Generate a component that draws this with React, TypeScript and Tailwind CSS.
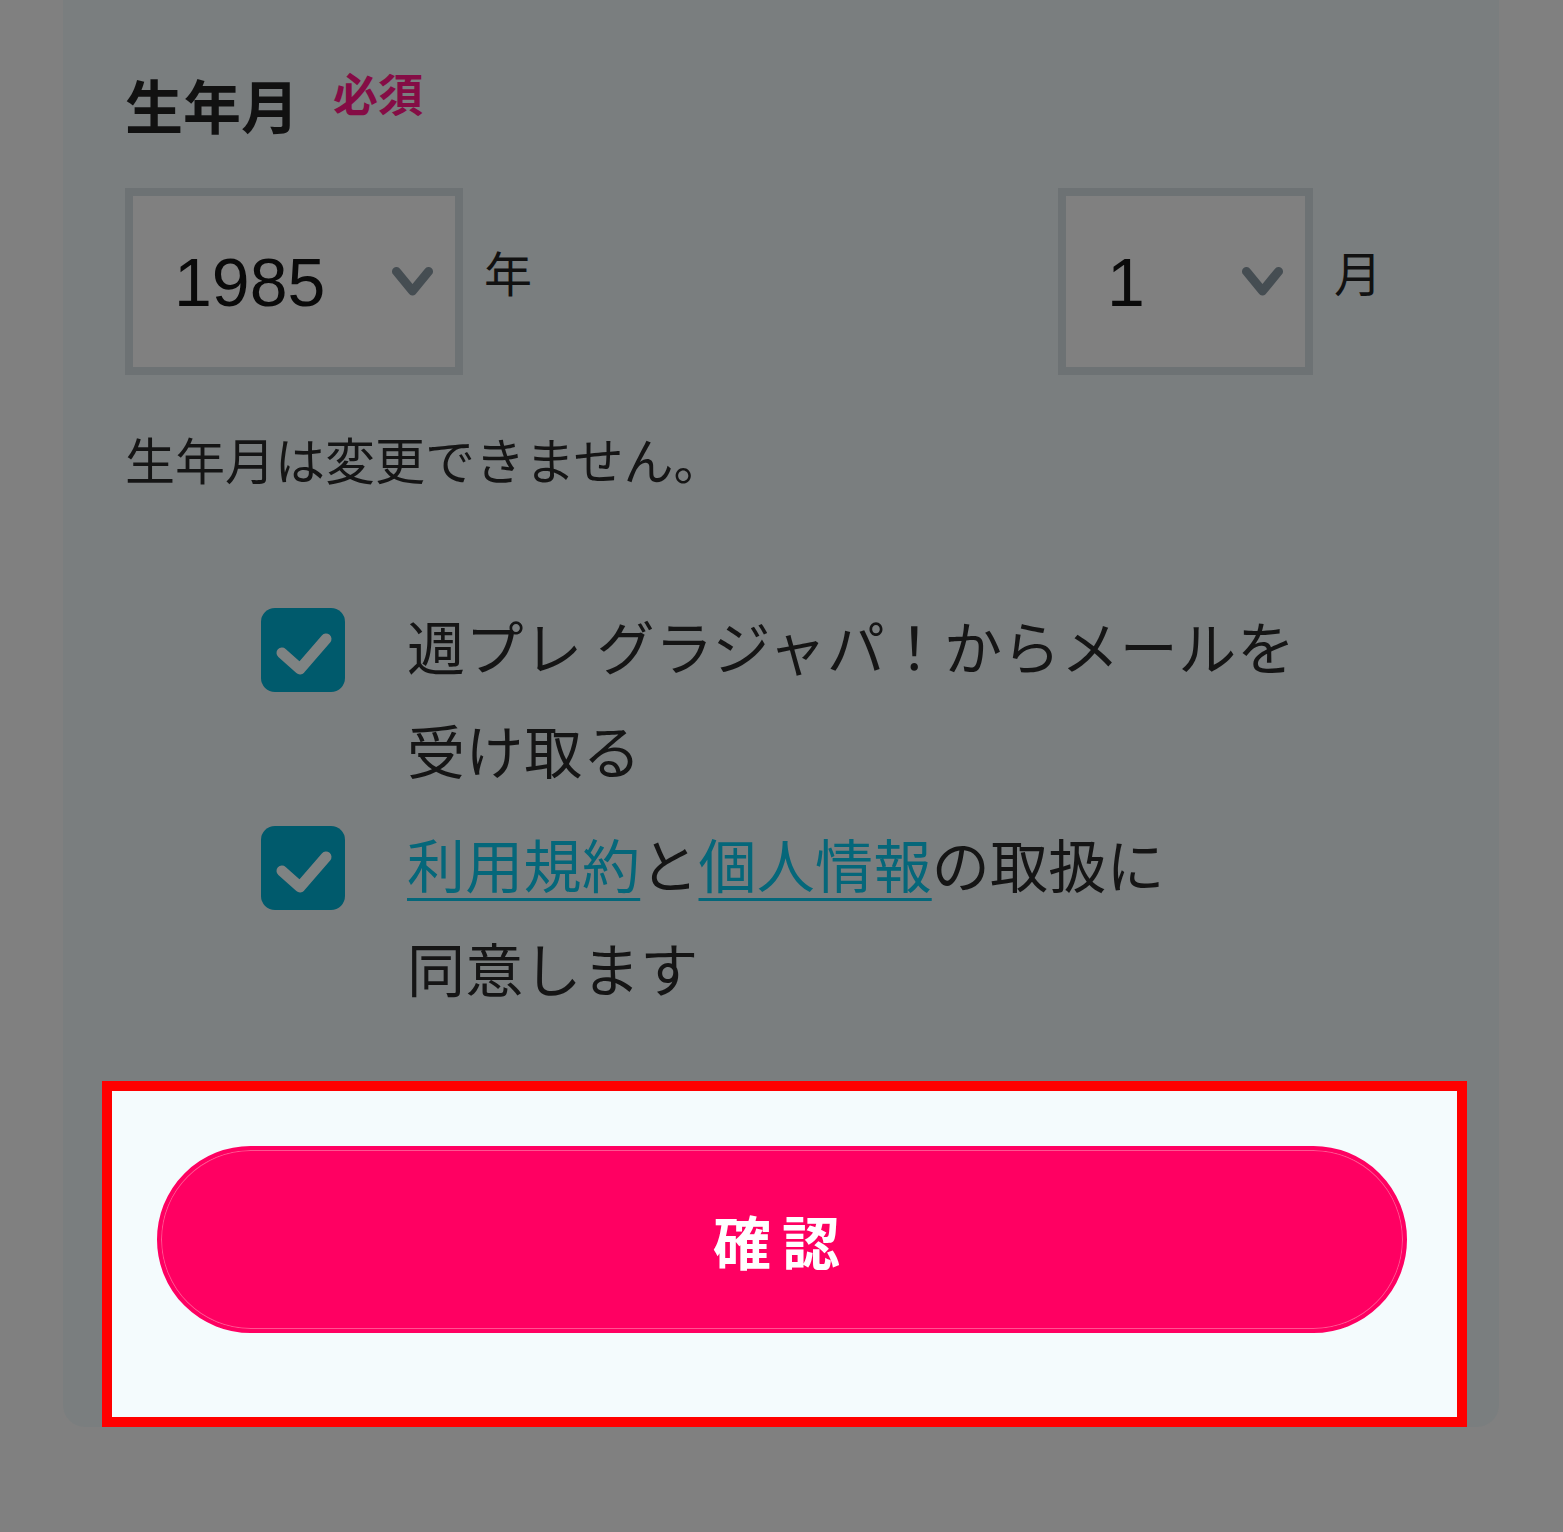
import React from "react";

const jp = { fontFamily: '"Noto Sans CJK JP", "Noto Sans", sans-serif' };
const num = { fontFamily: '"Liberation Sans", "Noto Sans CJK JP", sans-serif' };

function Chevron() {
  return (
    <svg width="41" height="29" viewBox="0 0 41 29" fill="none">
      <path d="M4.5 4.5 L20.5 24 L36.5 4.5" stroke="#454d52" strokeWidth="9" strokeLinecap="round" strokeLinejoin="round" />
    </svg>
  );
}

function Select({ value, width }: { value: string; width: string }) {
  return (
    <div className={`flex h-[187px] ${width} items-center justify-between border-[8px] border-[#6d7274] bg-[#808080] pl-[41px] pr-[22px]`}>
      <span className="text-[68px] leading-none text-[#0a0a0a]" style={num}>{value}</span>
      <Chevron />
    </div>
  );
}

function Check() {
  return (
    <div className="mt-[15px] flex h-[84px] w-[84px] shrink-0 items-center justify-center rounded-[14px] bg-[#005a6c]">
      <svg width="84" height="84" viewBox="0 0 84 84" fill="none">
        <path d="M21 45 L39 61 L65 31" stroke="#7f8383" strokeWidth="11" strokeLinecap="round" strokeLinejoin="round" />
      </svg>
    </div>
  );
}

export default function App() {
  return (
    <div className="min-h-[1532px] w-full bg-[#808080]" style={jp}>
      <div className="ml-[63px] w-[1436px] rounded-b-[22px] bg-[#7a7e7f] px-[62px] pt-[75px]">
        <div className="flex items-start">
          <h2 className="text-[58px] font-bold leading-none text-[#111111]">生年月</h2>
          <span className="ml-[34px] -mt-[5px] text-[45px] font-bold leading-none text-[#850c45]">必須</span>
        </div>

        <div className="mt-[55px] flex items-start justify-between pr-[55px]">
          <div className="flex items-start">
            <Select value="1985" width="w-[338px]" />
            <span className="ml-[21px] mt-[59px] text-[48px] leading-none text-[#111111]">年</span>
          </div>
          <div className="flex items-start">
            <Select value="1" width="w-[255px]" />
            <span className="ml-[21px] mt-[59px] text-[48px] leading-none text-[#111111]">月</span>
          </div>
        </div>

        <p className="mt-[46px] text-[50px] leading-[75px] text-[#151515]">生年月は変更できません。</p>

        <div className="mt-[97px] flex flex-col gap-[10px] pl-[136px]">
          <label className="flex items-start gap-[62px]">
            <Check />
            <span className="text-[58px] leading-[104px] tracking-[0.6px] text-[#151515]">
              週プレ グラジャパ！からメールを<br />受け取る
            </span>
          </label>
          <label className="flex items-start gap-[62px]">
            <Check />
            <span className="text-[58px] leading-[104px] tracking-[0.3px] text-[#151515]">
              <a className="text-[#05677a] underline decoration-[3px] underline-offset-[10px]">利用規約</a>と
              <a className="text-[#05677a] underline decoration-[3px] underline-offset-[10px]">個人情報</a>の取扱に
              <br />同意します
            </span>
          </label>
        </div>

        <div className="-mb-[10px] mt-[62px] ml-[-23px] mr-[-30px] border-[10px] border-[#ff0000] bg-[#f4fbfd] pb-[84px] pl-[45px] pt-[55px]">
          <button className="flex h-[187px] w-[1250px] items-center justify-center rounded-full border-[4px] border-[#ff0062] bg-[#ff0062] shadow-[inset_0_0_0_1px_#ff5592]">
            <span className="text-[58px] font-bold leading-none tracking-[11px] text-white">確認</span>
          </button>
        </div>
      </div>
    </div>
  );
}
